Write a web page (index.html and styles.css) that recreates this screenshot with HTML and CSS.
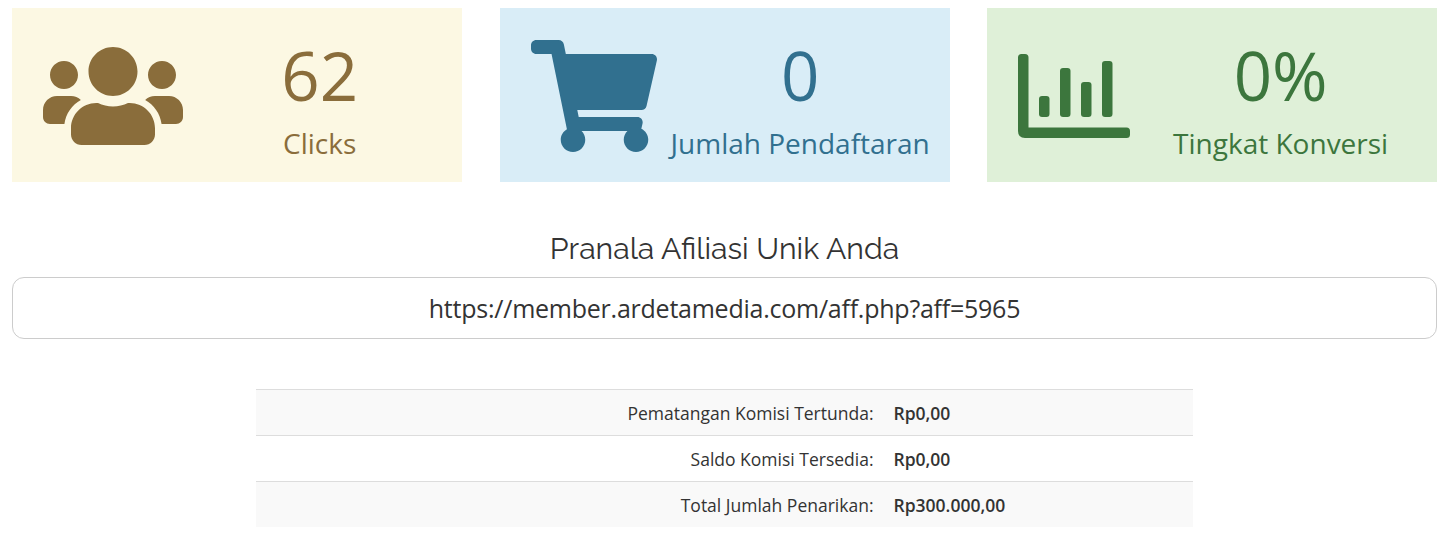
FILE: index.html
```html
<!DOCTYPE html>
<html lang="id">
<head>
<meta charset="utf-8">
<title>Afiliasi</title>
<link rel="stylesheet" href="styles.css">
</head>
<body>
<main class="page">
  <section class="stats">
    <div class="stat stat-clicks">
      <svg class="icon" width="140" height="112" viewBox="0 0 640 512"><path d="M96 224c35.3 0 64-28.7 64-64s-28.7-64-64-64-64 28.7-64 64 28.7 64 64 64zm448 0c35.3 0 64-28.7 64-64s-28.7-64-64-64-64 28.7-64 64 28.7 64 64 64zm32 32h-64c-17.6 0-33.5 7.1-45.1 18.6 40.3 22.1 68.9 62 75.1 109.4h66c17.7 0 32-14.3 32-32v-32c0-35.3-28.7-64-64-64zm-256 0c61.9 0 112-50.1 112-112S381.9 32 320 32 208 82.1 208 144s50.1 112 112 112zm76.8 32h-8.3c-20.8 10-43.9 16-68.5 16s-47.6-6-68.5-16h-8.3C179.6 288 128 339.6 128 403.2V432c0 26.5 21.5 48 48 48h288c26.5 0 48-21.5 48-48v-28.8c0-63.6-51.6-115.2-115.2-115.2zm-223.7-13.4C161.5 263.1 145.6 256 128 256H64c-35.3 0-64 28.7-64 64v32c0 17.7 14.3 32 32 32h65.9c6.3-47.4 34.9-87.3 75.2-109.4z"/></svg>
      <div class="figure"><span class="number">62</span><span class="label">Clicks</span></div>
    </div>
    <div class="stat stat-signups">
      <svg class="icon" width="126" height="112" viewBox="0 0 576 512"><path d="M528.12 301.319l47.273-208C578.806 78.301 567.391 64 551.99 64H159.208l-9.166-44.81C147.758 8.021 137.93 0 126.529 0H24C10.745 0 0 10.745 0 24v16c0 13.255 10.745 24 24 24h69.883l70.248 343.435C147.325 417.1 136 435.222 136 456c0 30.928 25.072 56 56 56s56-25.072 56-56c0-15.674-6.447-29.835-16.824-40h209.647C430.447 426.165 424 440.326 424 456c0 30.928 25.072 56 56 56s56-25.072 56-56c0-22.172-12.888-41.332-31.579-50.405l5.517-24.276c3.413-15.018-8.002-29.319-23.403-29.319H218.117l-6.545-32h293.145c11.206 0 20.92-7.754 23.403-18.681z"/></svg>
      <div class="figure"><span class="number">0</span><span class="label">Jumlah Pendaftaran</span></div>
    </div>
    <div class="stat stat-conversion">
      <svg class="icon" width="112" height="112" viewBox="0 0 512 512"><path d="M16 64h16q16 0 16 16v320h448q16 0 16 16v16q0 16-16 16H32q-32 0-32-32V80q0-16 16-16z"/><rect x="96" y="256" width="48" height="96" rx="14"/><rect x="192" y="128" width="48" height="224" rx="14"/><rect x="288" y="192" width="48" height="160" rx="14"/><rect x="384" y="96" width="48" height="256" rx="14"/></svg>
      <div class="figure"><span class="number">0%</span><span class="label">Tingkat Konversi</span></div>
    </div>
  </section>
  <section class="referral">
    <h3 class="title"><span>Pranala Afiliasi Unik Anda</span></h3>
    <div class="link"><span>https://member.ardetamedia.com/aff.php?aff=5965</span></div>
  </section>
  <table class="balance">
    <tr><td class="name"><span>Pematangan Komisi Tertunda:</span></td><td class="amount"><span>Rp0,00</span></td></tr>
    <tr><td class="name"><span>Saldo Komisi Tersedia:</span></td><td class="amount"><span>Rp0,00</span></td></tr>
    <tr><td class="name"><span>Total Jumlah Penarikan:</span></td><td class="amount"><span>Rp300.000,00</span></td></tr>
  </table>
</main>
</body>
</html>
```
FILE: styles.css
```css
* { box-sizing: border-box; }
body {
  margin: 0;
  background: #fff;
  color: #333;
  font-family: "Open Sans", "Noto Sans", sans-serif;
}
.page { padding: 8px 13px 0 12px; }
.stats {
  display: grid;
  grid-template-columns: repeat(3, 450px);
  justify-content: space-between;
}
.stat {
  display: flex;
  height: 174px;
  padding: 32px 6px 0 31.3px;
}
.icon { flex: none; fill: currentColor; }
.stat-clicks { background: #fcf8e3; color: #8a6d3b; }
.stat-signups { background: #d9edf7; color: #31708f; }
.stat-conversion { background: #dff0d8; color: #3c763d; }
.figure {
  flex: 1;
  display: flex;
  flex-direction: column;
  align-items: center;
  white-space: nowrap;
}
.number { font-size: 67.2px; line-height: 70px; }
.label { font-size: 28px; line-height: 40px; margin-top: 13px; }
.referral { margin-top: 48px; text-align: center; }
.title {
  margin: 0;
  font: 400 30.2px/38px Raleway, Lato, sans-serif;
}
.link {
  margin-top: 9px;
  height: 62px;
  border: 1px solid #ccc;
  border-radius: 12px;
  font-size: 25px;
  line-height: 60px;
  letter-spacing: -0.24px;
}
.balance {
  width: 937px;
  margin: 50px auto 0 244px;
  border-collapse: collapse;
  table-layout: fixed;
  font-size: 17.5px;
}
.balance tr { height: 46px; border-top: 1px solid #ddd; }
.balance tr:last-child { height: 45px; }
.balance tr:nth-child(odd) { background: #f9f9f9; }
.balance td { padding: 0 10px; line-height: 44px; }
.balance tr:last-child td { padding-top: 1px; }
.balance .name { width: 627.5px; text-align: right; }
.balance .amount { font-weight: 600; }
```
